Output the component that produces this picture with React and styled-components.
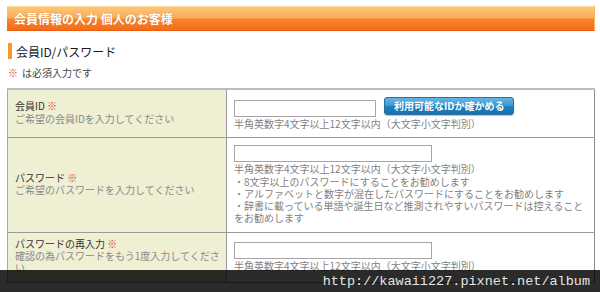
import React from "react";
import styled, { createGlobalStyle } from "styled-components";

const GlobalStyle = createGlobalStyle`
  html, body {
    margin: 0;
    padding: 0;
    background: #fff;
  }
  body {
    font-family: "Noto Sans CJK JP", "Noto Sans", sans-serif;
    color: #333;
  }
`;

const Page = styled.div`
  width: 600px;
  height: 292px;
  overflow: hidden;
  position: relative;
  padding: 6px 5px 0 7px;
  box-sizing: border-box;
`;

const TitleBar = styled.div`
  height: 25px;
  box-sizing: border-box;
  padding-left: 7px;
  display: flex;
  align-items: center;
  color: #fff;
  font-size: 12px;
  font-weight: bold;
  text-shadow: 0 0 1px rgba(180, 70, 0, 0.5);
  background: linear-gradient(#fcc67a 0%, #f9ad55 48%, #f7862e 52%, #f46c16 100%);
  border-top: 1px solid #fcd79a;
  border-bottom: 1px solid #ea5c0e;
  border-right: 1px solid #f9b36b;
`;

const SectionHeading = styled.h2`
  margin: 12px 0 0 1px;
  height: 16px;
  border-left: 4px solid #f39a2a;
  padding-left: 4px;
  display: flex;
  align-items: center;
  font-size: 12px;
  font-weight: normal;
  color: #1a1a1a;
`;

const Note = styled.p`
  margin: 8px 0 0 1px;
  font-size: 10px;
  line-height: 12px;
  color: #444;
`;

const Mark = styled.span`
  color: #e83a3a;
  margin-right: ${({ gap }) => gap || 0}px;
`;

const Table = styled.table`
  margin-top: 9px;
  width: 588px;
  border-collapse: collapse;
  border-top: 2px solid #bcbcbc;
  border-left: 1px solid #a8a8a8;
  border-right: 1px solid #8a8a8a;
  font-size: 10px;
  line-height: 12.3px;
`;

const Row = styled.tr`
  border-bottom: 1px solid #9a9a9a;
`;

const LabelCell = styled.th`
  width: 219px;
  box-sizing: border-box;
  background: #efefd3;
  border-right: 1px solid #9a9a9a;
  padding: 5px 5px 7px 7px;
  text-align: left;
  vertical-align: middle;
  font-weight: 400;
`;

const LabelMain = styled.div`
  color: #333;
`;

const LabelSub = styled.div`
  color: #8a8a8a;
`;

const FieldCell = styled.td`
  padding: 7px 7px;
  vertical-align: middle;
  background: #fff;
`;

const FieldLine = styled.div`
  display: flex;
  align-items: flex-start;
  gap: 8px;
`;

const TextInput = styled.input`
  display: block;
  width: ${({ w }) => w}px;
  height: 17px;
  box-sizing: border-box;
  margin: ${({ offset }) => offset || 0}px 0 0 0;
  border: 1px solid #a5a5a5;
  background: #fff;
  padding: 0 2px;
  font-size: 10px;
`;

const CheckButton = styled.button`
  display: block;
  height: 18px;
  padding: 0 9px;
  border: 1px solid #2b6f9c;
  border-radius: 3px;
  background: linear-gradient(#62b6e6 0%, #3a98d2 48%, #1f7fbd 52%, #1871ab 100%);
  color: #fff;
  font-family: "Noto Sans CJK JP", sans-serif;
  font-size: 10px;
  font-weight: bold;
  line-height: 16px;
  box-shadow: 0 1px 1px rgba(0, 0, 0, 0.25);
`;

const Hint = styled.div`
  margin-top: 1px;
  color: #7f7f7f;
`;

const Watermark = styled.div`
  position: absolute;
  left: 0;
  right: 0;
  bottom: 0;
  height: 22px;
  background: rgba(0, 0, 0, 0.83);
  display: flex;
  align-items: center;
  justify-content: flex-end;
  padding-right: 10px;
  font-family: "Liberation Mono", monospace;
  font-size: 13.5px;
  color: #e4e4e4;
`;

const hintText = "半角英数字4文字以上12文字以内（大文字小文字判別）";

export default function App() {
  return (
    <>
      <GlobalStyle />
      <Page>
        <TitleBar>会員情報の入力 個人のお客様</TitleBar>
        <SectionHeading>会員ID/パスワード</SectionHeading>
        <Note>
          <Mark gap={4}>※</Mark>は必須入力です
        </Note>
        <Table>
          <tbody>
            <Row>
              <LabelCell>
                <LabelMain>
                  会員ID <Mark>※</Mark>
                </LabelMain>
                <LabelSub>ご希望の会員IDを入力してください</LabelSub>
              </LabelCell>
              <FieldCell>
                <FieldLine>
                  <TextInput w={142} offset={3} />
                  <CheckButton>利用可能なIDか確かめる</CheckButton>
                </FieldLine>
                <Hint>{hintText}</Hint>
              </FieldCell>
            </Row>
            <Row>
              <LabelCell>
                <LabelMain>
                  パスワード <Mark>※</Mark>
                </LabelMain>
                <LabelSub>ご希望のパスワードを入力してください</LabelSub>
              </LabelCell>
              <FieldCell>
                <TextInput w={198} type="password" />
                <Hint>
                  {hintText}
                  <br />
                  ・8文字以上のパスワードにすることをお勧めします
                  <br />
                  ・アルファベットと数字が混在したパスワードにすることをお勧めします
                  <br />
                  ・辞書に載っている単語や誕生日など推測されやすいパスワードは控えること
                  <br />
                  をお勧めします
                </Hint>
              </FieldCell>
            </Row>
            <Row>
              <LabelCell>
                <LabelMain>
                  パスワードの再入力 <Mark>※</Mark>
                </LabelMain>
                <LabelSub>
                  確認の為パスワードをもう1度入力してくださ
                  <br />い
                </LabelSub>
              </LabelCell>
              <FieldCell>
                <TextInput w={198} type="password" />
                <Hint>{hintText}</Hint>
              </FieldCell>
            </Row>
          </tbody>
        </Table>
        <Watermark>http://kawaii227.pixnet.net/album</Watermark>
      </Page>
    </>
  );
}
